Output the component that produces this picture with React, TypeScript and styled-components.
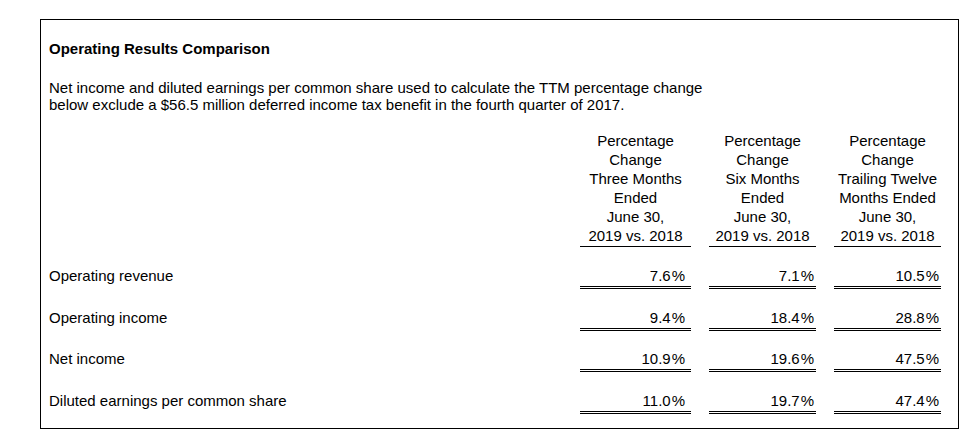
import * as React from "react";
import styled, { createGlobalStyle } from "styled-components";

const GlobalStyle = createGlobalStyle`
  html, body {
    margin: 0;
    padding: 0;
    background: #fff;
  }
  body {
    font-family: "Liberation Sans", Arial, Helvetica, sans-serif;
    color: #000;
  }
`;

const Page = styled.div`
  padding: 19px 12px 6px 40px;
`;

const Panel = styled.section`
  width: 917px;
  border: 1px solid #000;
  padding: 20px 0 14px 8px;
  box-sizing: content-box;
  width: 909px;
  font-size: 15px;
`;

const Title = styled.h2`
  margin: 0;
  font-size: 15px;
  font-weight: bold;
  line-height: 17px;
`;

const Note = styled.p`
  margin: 22px 0 0;
  font-size: 15px;
  line-height: 17px;
`;

const Table = styled.div`
  margin-top: 18px;
  display: grid;
  grid-template-columns: 1fr 111px 107px 107px;
  column-gap: 18px;
  row-gap: 19.5px;
  padding-right: 17px;
`;

const HeadCell = styled.div`
  text-align: center;
  line-height: 19px;
  padding-bottom: 1px;
  border-bottom: 1px solid #000;
  margin-bottom: 0.5px;
`;

const Label = styled.div`
  line-height: 17px;
`;

const Value = styled.div<{ $pad: number }>`
  text-align: right;
  line-height: 17px;
  padding: 0 ${(p) => p.$pad}px 2px 0;
  border-bottom: 3px double #000;
`;

const Pct = styled.span`
  margin-left: 1px;
`;

const headers = [
  ["Percentage", "Change", "Three Months", "Ended", "June 30,", "2019 vs. 2018"],
  ["Percentage", "Change", "Six Months", "Ended", "June 30,", "2019 vs. 2018"],
  ["Percentage", "Change", "Trailing Twelve", "Months Ended", "June 30,", "2019 vs. 2018"],
];

const pads = [6, 2, 2];

const rows: { label: string; values: string[] }[] = [
  { label: "Operating revenue", values: ["7.6", "7.1", "10.5"] },
  { label: "Operating income", values: ["9.4", "18.4", "28.8"] },
  { label: "Net income", values: ["10.9", "19.6", "47.5"] },
  { label: "Diluted earnings per common share", values: ["11.0", "19.7", "47.4"] },
];

export default function App() {
  return (
    <>
      <GlobalStyle />
      <Page>
        <Panel>
          <Title>Operating Results Comparison</Title>
          <Note>
            Net income and diluted earnings per common share used to calculate the TTM percentage change
            <br />
            below exclude a $56.5 million deferred income tax benefit in the fourth quarter of 2017.
          </Note>
          <Table>
            <div />
            {headers.map((lines, i) => (
              <HeadCell key={i}>
                {lines.map((l, j) => (
                  <div key={j}>{l}</div>
                ))}
              </HeadCell>
            ))}
            {rows.map((r) => (
              <React.Fragment key={r.label}>
                <Label>{r.label}</Label>
                {r.values.map((v, i) => (
                  <Value key={i} $pad={pads[i]}>
                    {v}
                    <Pct>%</Pct>
                  </Value>
                ))}
              </React.Fragment>
            ))}
          </Table>
        </Panel>
      </Page>
    </>
  );
}
